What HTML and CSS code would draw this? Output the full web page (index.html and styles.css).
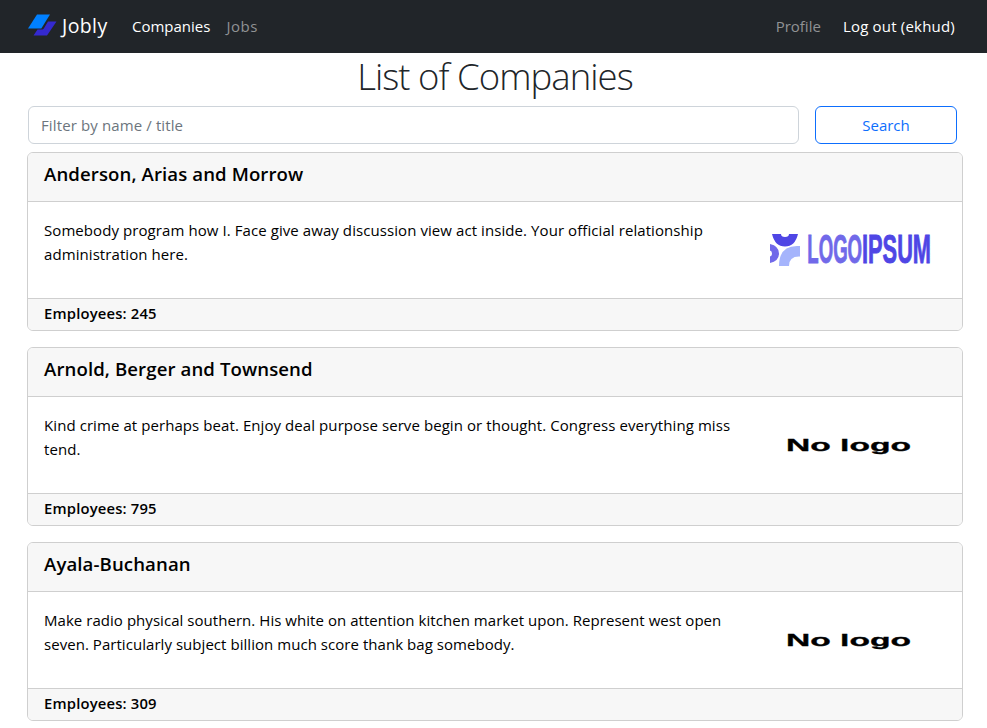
FILE: index.html
```html
<!DOCTYPE html>
<html lang="en">
<head>
<meta charset="utf-8">
<title>Jobly</title>
<link rel="stylesheet" href="styles.css">
</head>
<body>
<nav class="navbar">
  <a class="brand"><svg class="brand-mark" width="30" height="24" viewBox="0 0 30 24"><path fill="#0080ff" d="M9 .5H22L13.300 14.500H0z"/><path fill="#3429cf" d="M20 7.500H28.500L19 21.500H5.500L9.500 15.500H14.200Q15.200 15.500 15.800 14.500z"/></svg><span class="brand-name">Jobly</span></a>
  <div class="links"><a class="link companies active">Companies</a><a class="link jobs">Jobs</a></div>
  <div class="account"><a class="link profile">Profile</a><a class="link logout active">Log out (ekhud)</a></div>
</nav>
<main class="container">
  <h1 class="title"><span>List of Companies</span></h1>
  <form class="search">
    <input class="search-input" type="text" placeholder="Filter by name / title">
    <button class="search-button" type="button">Search</button>
  </form>
  <article class="card">
    <header class="card-header"><h5 class="name">Anderson, Arias and Morrow</h5></header>
    <div class="card-body">
      <p class="description">Somebody program how I. Face give away discussion view act inside. Your official relationship<br>administration here.</p>
      <svg class="logo" width="162" height="64" viewBox="0 0 162 64">
        <path fill="#4f46e5" d="M3 16H12A4 3 0 0 0 20 16H29Q26 28.500 16 28.500Q6 28.500 3 16z"/>
        <path fill="#7169e9" d="M1 26Q10 28 10 35.500Q10 43 1 45V38.500Q3 38 3 35.500Q3 33 1 32.500z"/>
        <path fill="#a5b4fc" d="M10 48Q10 28 28 28H31V38.500Q20 38 20 48z"/>
        <text class="wordmark first" transform="translate(38.300 45) scale(.465 1)">LOGO</text>
        <text class="wordmark second" transform="translate(93 45) scale(.545 1)">IPSUM</text>
      </svg>
    </div>
    <footer class="card-footer"><span>Employees: 245</span></footer>
  </article>
  <article class="card">
    <header class="card-header"><h5 class="name">Arnold, Berger and Townsend</h5></header>
    <div class="card-body">
      <p class="description">Kind crime at perhaps beat. Enjoy deal purpose serve begin or thought. Congress everything miss<br>tend.</p>
      <svg class="logo" width="162" height="64" viewBox="0 0 162 64"><text class="no-logo" x="17" y="38" textLength="125" lengthAdjust="spacingAndGlyphs">No logo</text></svg>
    </div>
    <footer class="card-footer"><span>Employees: 795</span></footer>
  </article>
  <article class="card">
    <header class="card-header"><h5 class="name">Ayala-Buchanan</h5></header>
    <div class="card-body">
      <p class="description compact">Make radio physical southern. His white on attention kitchen market upon. Represent west open<br>seven. Particularly subject billion much score thank bag somebody.</p>
      <svg class="logo" width="162" height="64" viewBox="0 0 162 64"><text class="no-logo" x="17" y="38" textLength="125" lengthAdjust="spacingAndGlyphs">No logo</text></svg>
    </div>
    <footer class="card-footer"><span>Employees: 309</span></footer>
  </article>
</main>
</body>
</html>
```
FILE: styles.css
```css
* { box-sizing: border-box; }
body {
  margin: 0;
  height: 728px;
  overflow: hidden;
  background: #fff;
  color: #000;
  font: 400 15px/24px "Open Sans", "Noto Sans", sans-serif;
}
.navbar {
  display: flex;
  align-items: center;
  height: 53px;
  padding: 0 32px 2px 28px;
  background: #212529;
}
.brand { display: flex; align-items: center; width: 104px; color: #fff; }
.brand-mark { margin-right: 4px; }
.brand-name { font-size: 19.5px; letter-spacing: .4px; }
.links, .account { display: flex; }
.links { gap: 16px; }
.account { gap: 22px; margin-left: auto; }
.link { color: #909294; white-space: nowrap; }
.link.active { color: #fff; }
.jobs { letter-spacing: .5px; }
.logout { letter-spacing: .2px; }
.container { padding: 0 24px 0 27px; }
.title {
  height: 53px;
  margin: 0;
  color: #212529;
  font-size: 36.5px;
  font-weight: 300;
  letter-spacing: -.95px;
  line-height: 47px;
  text-align: center;
}
.search {
  display: grid;
  grid-template-columns: 771px 142px;
  gap: 16px;
  padding-left: 1px;
  margin-bottom: 8px;
}
.search-input, .search-button {
  height: 38px;
  border: 1px solid #ced4da;
  border-radius: 6px;
  background: #fff;
  font: inherit;
}
.search-input { padding: 0 12px; letter-spacing: .12px; }
.search-input::placeholder { color: #6c757d; opacity: 1; }
.search-button { border-color: #0d6efd; color: #0d6efd; }
.card {
  height: 179px;
  margin-bottom: 16px;
  border: 1px solid #cfcfcf;
  border-radius: 6px;
  overflow: hidden;
}
.card-header {
  height: 49px;
  padding: 9px 16px;
  border-bottom: 1px solid #cfcfcf;
  background: #f7f7f7;
}
.name { margin: 0; font-size: 18.6px; font-weight: 600; letter-spacing: .1px; line-height: 24px; }
.card-body {
  display: flex;
  justify-content: space-between;
  height: 96px;
  padding: 16px 31px 16px 16px;
}
.description { margin: 0; letter-spacing: .077px; white-space: nowrap; }
.description.compact { letter-spacing: .046px; }
.card-footer {
  height: 32px;
  padding: 2px 16px;
  border-top: 1px solid #cfcfcf;
  background: #f7f7f7;
  font-size: 14.8px;
  font-weight: 600;
  letter-spacing: .18px;
}
.wordmark { font: 700 40px "Liberation Sans", sans-serif; stroke-width: .9px; }
.first { fill: #7169e9; stroke: #7169e9; }
.second { fill: #4f46e5; stroke: #4f46e5; }
.no-logo { font: 700 17px "Liberation Sans", sans-serif; stroke: #000; stroke-width: .3px; }
```
